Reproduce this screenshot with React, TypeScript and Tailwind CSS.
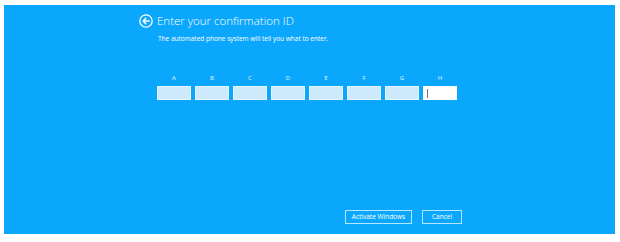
import * as React from "react"

const LETTERS = ["A", "B", "C", "D", "E", "F", "G", "H"]

function BackIcon() {
  return (
    <svg width="14" height="14" viewBox="0 0 14 14" fill="none" className="shrink-0">
      <circle cx="7" cy="7" r="6.2" stroke="white" strokeWidth="1.3" />
      <path d="M10.2 7H4.2M6.8 4.3L4.1 7l2.7 2.7" stroke="white" strokeWidth="1.5" strokeLinecap="round" strokeLinejoin="round" />
    </svg>
  )
}

export default function App() {
  return (
    <div className="h-[242px] w-[620px] bg-white pl-[4px] pt-[5px] font-['Open_Sans',sans-serif]">
      <div className="flex h-[229px] w-[611px] flex-col bg-[#0aa7fd] pl-[135px] pr-[153px] pb-[10px] text-white">
        {/* Heading */}
        <div className="mt-[9px] flex h-[14px] items-center gap-[4px]">
          <BackIcon />
          <span className="text-[11.5px] font-light leading-[14px]">Enter your confirmation ID</span>
        </div>
        <p className="mt-[7px] pl-[19px] text-[6.5px] leading-[8px]">
          The automated phone system will tell you what to enter.
        </p>

        {/* Confirmation ID boxes */}
        <div className="mt-[31px] flex gap-[4px] pl-[18px]">
          {LETTERS.map((l, i) => (
            <div key={l} className="flex w-[34px] flex-col items-center">
              <span className="text-[6px] leading-[8px] text-white/85">{l}</span>
              <div
                className={[
                  "mt-[4px] flex h-[14px] w-[34px] items-center border",
                  i === 7 ? "border-white bg-white" : "border-white/50 bg-[#cdeafd]",
                ].join(" ")}
              >
                {i === 7 && <span className="ml-[3px] h-[9px] w-px bg-gray-500" />}
              </div>
            </div>
          ))}
        </div>

        {/* Actions */}
        <div className="mt-auto flex justify-end gap-[10px]">
          <button
            type="button"
            className="h-[14px] w-[67px] border border-white/70 text-[6.5px] leading-none text-white"
          >
            Activate Windows
          </button>
          <button
            type="button"
            className="h-[14px] w-[40px] border border-white/70 text-[6.5px] leading-none text-white"
          >
            Cancel
          </button>
        </div>
      </div>
    </div>
  )
}
